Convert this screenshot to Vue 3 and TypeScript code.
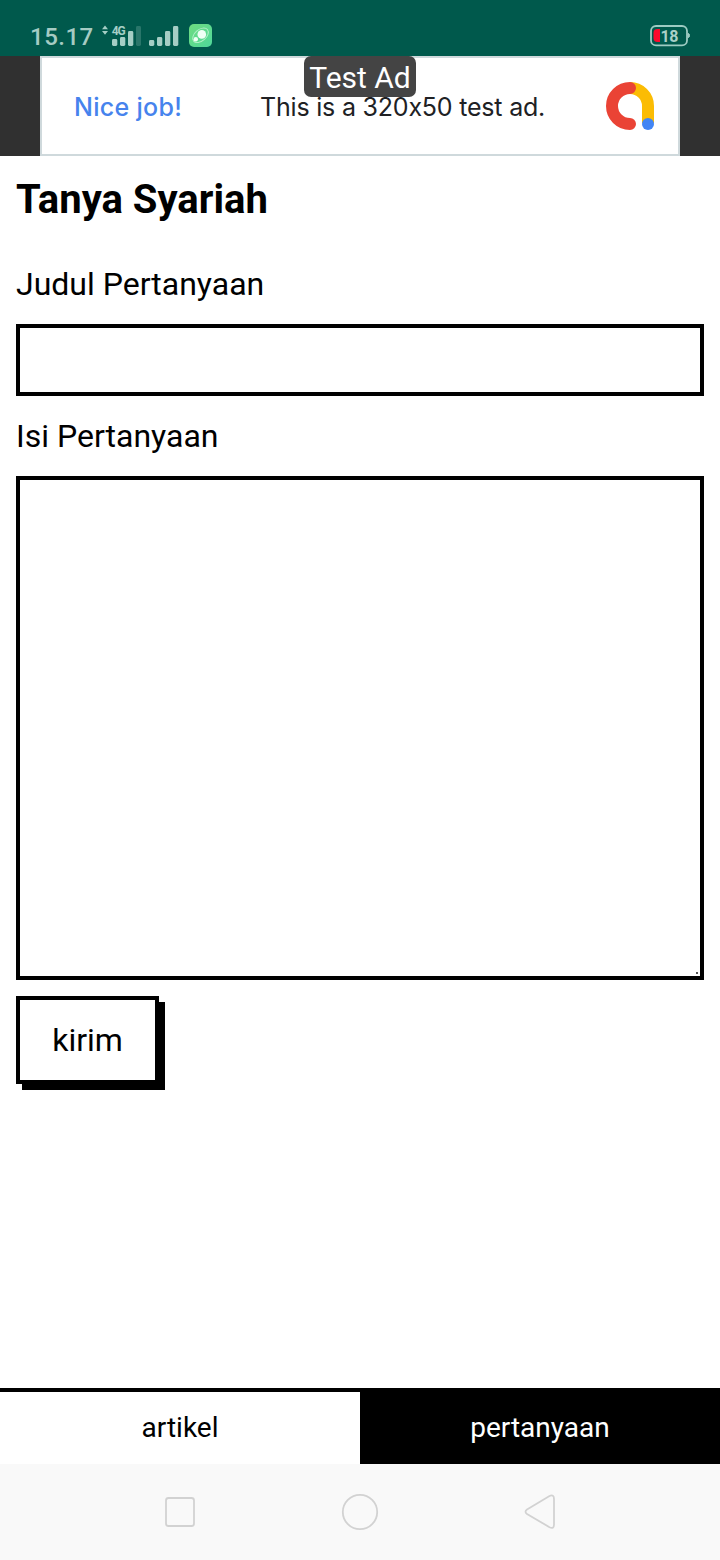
<script setup lang="ts">
import { ref } from 'vue'

const judul = ref('')
const isi = ref('')
const active = ref('pertanyaan')
const tabs: string[] = ['artikel', 'pertanyaan']
</script>

<template>
  <div class="screen">
    <header class="status">
      <span class="clock">15.17</span>
      <svg class="signals" width="120" height="30" viewBox="100 20 120 30">
        <path d="M102 29.3l3-3.8 3 3.800zM102 31l3 3.800 3-3.800z" fill="#a5cec5" />
        <text x="111.7" y="34.5" class="net" textLength="14">4G</text>
        <g fill="#a5cec5">
          <rect x="112" y="39" width="5.300" height="7" rx="1.4" />
          <rect x="120" y="37" width="5.300" height="9" rx="1.4" />
          <rect x="128" y="31" width="5.300" height="15" rx="1.4" />
          <rect x="136" y="26" width="5" height="20" rx="1.4" opacity=".25" />
          <rect x="149" y="40" width="5.300" height="6" rx="1.4" />
          <rect x="157" y="37" width="5.300" height="9" rx="1.4" />
          <rect x="165" y="31" width="5.300" height="15" rx="1.4" />
          <rect x="173" y="26" width="5.300" height="20" rx="1.4" />
        </g>
        <defs>
          <linearGradient id="chat" x1="0" y1="0" x2="1" y2="1">
            <stop offset="0" stop-color="#6fdc80" />
            <stop offset="1" stop-color="#4fd89b" />
          </linearGradient>
        </defs>
        <rect x="189" y="24" width="23" height="23" rx="5" fill="url(#chat)" />
        <ellipse cx="200.5" cy="35.3" rx="9" ry="5.700" transform="rotate(-40 200.5 35.3)" fill="none" stroke="#b4f0c8" stroke-width="1" />
        <circle cx="201.8" cy="34.4" r="4.3" fill="#effff5" />
        <circle cx="195.8" cy="39.3" r="2.2" fill="#effff5" />
      </svg>
      <svg class="battery" width="42" height="24" viewBox="649 24 42 24">
        <rect x="651" y="26" width="36" height="19.4" rx="5" fill="none" stroke="#9dcbc2" stroke-width="1.800" />
        <path d="M688 33.500q1.500 0 1.500 2t-1.500 2z" fill="#9dcbc2" stroke="#9dcbc2" />
        <path d="M660 29v13h-2.500q-4 0-4-4v-5q0-4 4-4z" fill="#fb0a2c" />
        <text x="660.500" y="42" class="level" textLength="18">18</text>
      </svg>
    </header>

    <section class="ad-strip">
      <div class="ad">
        <span class="ad-title">Nice job!</span>
        <span class="ad-text">This is a 320x50 test ad.</span>
        <svg class="ad-logo" width="50" height="50" viewBox="605 81 50 50">
          <path d="M630 88A18 18 0 0 1 648 106V123" fill="none" stroke="#fbbc04" stroke-width="12" />
          <path d="M630 88A18 18 0 0 0 630 124" fill="none" stroke="#ea4335" stroke-width="12" stroke-linecap="round" />
          <circle cx="648" cy="124" r="6" fill="#4285f4" />
        </svg>
        <span class="ad-badge">Test Ad</span>
      </div>
    </section>

    <main class="content">
      <h1>Tanya Syariah</h1>
      <label for="judul">Judul Pertanyaan</label>
      <input id="judul" v-model="judul" type="text" />
      <label for="isi">Isi Pertanyaan</label>
      <div class="area">
        <textarea id="isi" v-model="isi"></textarea>
        <i class="grip"></i>
      </div>
      <button type="button" class="send">kirim</button>
    </main>

    <nav class="tabs">
      <a v-for="tab in tabs" :key="tab" :class="['tab', { active: tab === active }]" @click="active = tab">{{ tab }}</a>
    </nav>

    <footer class="system">
      <svg width="720" height="96" viewBox="0 0 720 96" fill="none" stroke="#d2d2d2" stroke-width="1.800">
        <rect x="166" y="34" width="28" height="28" rx="2.500" />
        <circle cx="360" cy="48" r="17.200" />
        <path d="M527 45.500L549.500 32Q554 30 554 35V60.500Q554 65.500 549.500 63.200L527 50Q524 47.700 527 45.500Z" />
      </svg>
    </footer>
  </div>
</template>

<style>
body {
  margin: 0;
}
</style>

<style scoped>
.screen {
  width: 720px;
  height: 1560px;
  display: flex;
  flex-direction: column;
  background: #fff;
  color: #000;
  font-family: Roboto, sans-serif;
  overflow: hidden;
}
.status {
  height: 56px;
  flex: none;
  display: flex;
  box-sizing: border-box;
  padding: 20px 29px 0 30px;
  background: #00594c;
}
.clock {
  width: 70px;
  font-size: 24px;
  font-weight: 500;
  line-height: 35px;
  letter-spacing: 0.5px;
  color: #a5cbc3;
}
.battery {
  margin: 4px 0 0 auto;
}
.net {
  font: 700 12px Roboto, sans-serif;
  fill: #a5cec5;
}
.level {
  font: 700 16px Roboto, sans-serif;
  fill: #a9d0c8;
}
.ad-strip {
  height: 100px;
  flex: none;
  display: flex;
  justify-content: center;
  background: #303030;
}
.ad {
  position: relative;
  box-sizing: border-box;
  width: 640px;
  display: flex;
  align-items: center;
  padding: 0 23px 0 32px;
  border: 2px solid #cfd9dc;
  background: #fff;
  font-family: Inter, sans-serif;
  font-feature-settings: "calt" 0;
  white-space: nowrap;
}
.ad-title,
.ad-text {
  padding-top: 2px;
  font-size: 25px;
}
.ad-title {
  width: 186px;
  font-weight: 500;
  letter-spacing: 0.3px;
  color: #4683ed;
}
.ad-text {
  letter-spacing: -0.2px;
  color: #202124;
}
.ad-logo {
  margin-left: auto;
}
.ad-badge {
  position: absolute;
  top: -2px;
  left: 262px;
  width: 112px;
  height: 41px;
  border-radius: 7px;
  background: #444;
  color: #fff;
  font: 30px/43px Roboto, sans-serif;
  text-align: center;
}
.content {
  flex: 1;
  display: flex;
  flex-direction: column;
  padding: 0 16px;
}
h1 {
  margin: 0;
  font-size: 40px;
  line-height: 88px;
  font-weight: 700;
}
label {
  font-size: 32px;
  line-height: 80px;
}
input,
textarea {
  display: block;
  box-sizing: border-box;
  width: 100%;
  margin: 0;
  padding: 12px;
  border: 4px solid #000;
  border-radius: 0;
  background: #fff;
  font: 32px Roboto, sans-serif;
  outline: none;
}
input {
  height: 72px;
}
.area {
  position: relative;
  height: 504px;
}
textarea {
  height: 504px;
  resize: none;
}
.grip {
  position: absolute;
  right: 6px;
  bottom: 6px;
  width: 2px;
  height: 2px;
  background: #555;
}
.send {
  align-self: flex-start;
  box-sizing: border-box;
  width: 143px;
  height: 88px;
  margin-top: 16px;
  padding: 0;
  border: 4px solid #000;
  border-radius: 0;
  background: #fff;
  box-shadow: 6px 6px 0 #000;
  color: #000;
  font: 32px Roboto, sans-serif;
}
.tabs {
  height: 76px;
  flex: none;
  box-sizing: border-box;
  display: flex;
  border-top: 4px solid #000;
}
.tab {
  flex: 1;
  font-size: 28px;
  line-height: 72px;
  text-align: center;
}
.tab.active {
  background: #000;
  color: #fff;
}
.system {
  height: 96px;
  flex: none;
  background: #f9f9f9;
}
.system svg {
  display: block;
}
</style>
